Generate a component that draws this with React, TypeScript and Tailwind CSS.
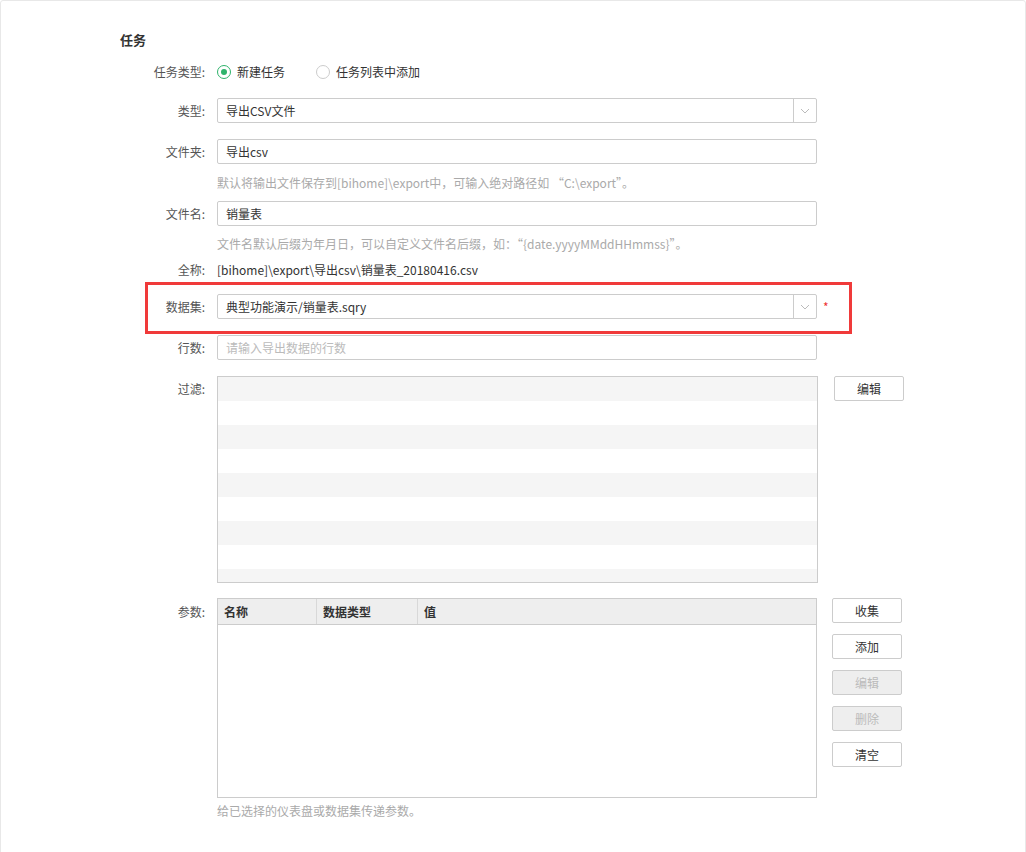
import React from "react";

const font = { fontFamily: '"Noto Sans CJK SC", "Liberation Sans", sans-serif' };

function Label({ children }: { children: React.ReactNode }) {
  return <div className="w-[87px] shrink-0 text-right text-[12px] text-[#555] pr-[2px]">{children}</div>;
}

function Chevron() {
  return (
    <svg width="10" height="6" viewBox="0 0 10 6" fill="none">
      <path d="M1 1 L5 5 L9 1" stroke="#bbb" strokeWidth="1" />
    </svg>
  );
}

function Select({ value }: { value: string }) {
  return (
    <div className="flex h-[25px] w-[600px] items-stretch rounded-[2px] border border-[#ccc] bg-white">
      <div className="flex flex-1 items-center px-[8px] text-[12px] text-[#333]">{value}</div>
      <div className="flex w-[23px] items-center justify-center border-l border-[#ccc]">
        <Chevron />
      </div>
    </div>
  );
}

function Input({ value, placeholder }: { value?: string; placeholder?: string }) {
  return (
    <div className="flex h-[25px] w-[600px] items-center rounded-[2px] border border-[#ccc] bg-white px-[8px] text-[12px]">
      {value ? <span className="text-[#333]">{value}</span> : <span className="text-[#bbb]">{placeholder}</span>}
    </div>
  );
}

function Btn({ children, disabled }: { children: React.ReactNode; disabled?: boolean }) {
  return (
    <div
      className={
        "flex h-[25px] w-[70px] items-center justify-center rounded-[2px] border border-[#ccc] text-[12px] " +
        (disabled ? "bg-[#eeeeee] text-[#bbb]" : "bg-white text-[#333]")
      }
    >
      {children}
    </div>
  );
}

export default function App() {
  const stripes = Array.from({ length: 9 });
  return (
    <div style={font} className="relative h-[852px] w-[1026px] overflow-hidden bg-white">
      <div className="absolute left-0 top-0 h-[900px] w-[1026px] rounded-[3px] border border-[#e8e8e8]" />
      <div className="relative pl-[120px] pt-[30px]">
        <div className="h-[20px] text-[13px] font-bold leading-[20px] text-[#333]">任务</div>

        <div className="mt-[12px] flex h-[20px] items-center">
          <Label>任务类型:</Label>
          <div className="ml-[10px] flex items-center text-[12px] text-[#333]">
            <span className="flex h-[14px] w-[14px] items-center justify-center rounded-full border border-[#2eb36b]">
              <span className="h-[6px] w-[6px] rounded-full bg-[#2eb36b]" />
            </span>
            <span className="ml-[6px]">新建任务</span>
            <span className="ml-[31px] h-[14px] w-[14px] rounded-full border border-[#ccc]" />
            <span className="ml-[6px]">任务列表中添加</span>
          </div>
        </div>

        <div className="mt-[16px] flex items-center">
          <Label>类型:</Label>
          <div className="ml-[10px]">
            <Select value="导出CSV文件" />
          </div>
        </div>

        <div className="mt-[16px] flex items-center">
          <Label>文件夹:</Label>
          <div className="ml-[10px]">
            <Input value="导出csv" />
          </div>
        </div>
        <div className="mt-[11px] h-[16px] pl-[97px] text-[12px] leading-[16px] text-[#aaa]">
          默认将输出文件保存到[bihome]\export中，可输入绝对路径如 “C:\export”。
        </div>

        <div className="mt-[10px] flex items-center">
          <Label>文件名:</Label>
          <div className="ml-[10px]">
            <Input value="销量表" />
          </div>
        </div>
        <div className="mt-[10px] h-[16px] pl-[97px] text-[12px] leading-[16px] text-[#aaa]">
          文件名默认后缀为年月日，可以自定义文件名后缀，如：“{"{"}date.yyyyMMddHHmmss{"}"}”。
        </div>

        <div className="mt-[10px] flex h-[16px] items-center">
          <Label>全称:</Label>
          <div className="ml-[10px] text-[12px] text-[#333]">[bihome]\export\导出csv\销量表_20180416.csv</div>
        </div>

        <div className="relative mt-[16px] flex items-center">
          <Label>数据集:</Label>
          <div className="ml-[10px]">
            <Select value="典型功能演示/销量表.sqry" />
          </div>
          <span className="ml-[6px] text-[12px] text-[#e33]">*</span>
          <div className="pointer-events-none absolute left-[25px] top-[-12px] h-[52px] w-[707px] border-[3px] border-[#f03a3a]" />
        </div>

        <div className="mt-[16px] flex items-center">
          <Label>行数:</Label>
          <div className="ml-[10px]">
            <Input placeholder="请输入导出数据的行数" />
          </div>
        </div>

        <div className="mt-[16px] flex items-start">
          <div className="pt-[4px]">
            <Label>过滤:</Label>
          </div>
          <div className="ml-[10px] h-[207px] w-[601px] overflow-hidden border border-[#ccc] bg-white">
            {stripes.map((_, i) => (
              <div key={i} className={"h-[24px] " + (i % 2 === 0 ? "bg-[#f5f5f5]" : "bg-white")} />
            ))}
          </div>
          <div className="ml-[16px]">
            <Btn>编辑</Btn>
          </div>
        </div>

        <div className="mt-[15px] flex items-start">
          <div className="pt-[5px]">
            <Label>参数:</Label>
          </div>
          <div className="ml-[10px] h-[200px] w-[600px] border border-[#ccc] bg-white">
            <div className="flex h-[26px] border-b border-[#ccc] bg-[#eeeeee] text-[12px] font-bold text-[#333]">
              <div className="flex w-[99px] items-center border-r border-[#d8d8d8] px-[6px]">名称</div>
              <div className="flex w-[101px] items-center border-r border-[#d8d8d8] px-[6px]">数据类型</div>
              <div className="flex flex-1 items-center px-[6px]">值</div>
            </div>
          </div>
          <div className="ml-[15px] flex flex-col gap-[11px]">
            <Btn>收集</Btn>
            <Btn>添加</Btn>
            <Btn disabled>编辑</Btn>
            <Btn disabled>删除</Btn>
            <Btn>清空</Btn>
          </div>
        </div>

        <div className="mt-[5px] h-[16px] pl-[97px] text-[12px] leading-[16px] text-[#aaa]">
          给已选择的仪表盘或数据集传递参数。
        </div>
      </div>
    </div>
  );
}
